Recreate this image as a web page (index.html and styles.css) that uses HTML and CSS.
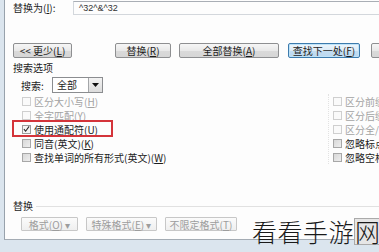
FILE: index.html
```html
<!DOCTYPE html>
<html lang="zh">
<head>
<meta charset="utf-8">
<link rel="stylesheet" href="styles.css">
</head>
<body>
<div class="dialog">
  <div class="row-replace">
    <span class="label">替换为(<u>I</u>):</span>
    <div class="field">^32^&amp;^32</div>
  </div>
  <div class="btn-row">
    <span class="btn b-less">&lt;&lt; 更少(<u>L</u>)</span>
    <span class="btn b-rep">替换(<u>R</u>)</span>
    <span class="btn b-all">全部替换(<u>A</u>)</span>
    <span class="btn b-next">查找下一处(<u>F</u>)</span>
    <span class="btn b-cut"></span>
  </div>
  <div class="section">搜索选项</div>
  <div class="search-row">
    <span class="label">搜索:</span>
    <div class="select"><span class="sel-text">全部</span><span class="sel-btn"><svg width="7" height="4" viewBox="0 0 7 4"><path d="M0 0h7L3.5 4z" fill="#111"/></svg></span></div>
  </div>
  <div class="opts">
    <div class="col">
      <div class="opt dis"><span class="box"></span>区分大小写(<u>H</u>)</div>
      <div class="opt dis"><span class="box"></span>全字匹配(<u>Y</u>)</div>
      <div class="opt"><span class="box on"><svg width="8" height="8" viewBox="0 0 8 8"><path d="M1 4.2l2 2.3L7 1" fill="none" stroke="#2a2a2a" stroke-width="1.2"/></svg></span>使用通配符(<u>U</u>)</div>
      <div class="opt"><span class="box en"></span>同音(英文)(<u>K</u>)</div>
      <div class="opt"><span class="box en"></span>查找单词的所有形式(英文)(<u>W</u>)</div>
    </div>
    <div class="col col-r">
      <div class="opt dis"><span class="box"></span>区分前缀(<u>X</u>)</div>
      <div class="opt dis"><span class="box"></span>区分后缀(<u>T</u>)</div>
      <div class="opt dis"><span class="box"></span>区分全/半角(<u>M</u>)</div>
      <div class="opt"><span class="box en"></span>忽略标点符号(<u>S</u>)</div>
      <div class="opt"><span class="box en"></span>忽略空格(<u>W</u>)</div>
    </div>
  </div>
  <div class="group"><span class="group-label">替换</span><span class="group-line"></span></div>
  <div class="btn-row2">
    <span class="btn dbtn d1">格式(<u>O</u>) ▾</span>
    <span class="btn dbtn d2">特殊格式(<u>E</u>) ▾</span>
    <span class="btn dbtn d3">不限定格式(<u>T</u>)</span>
  </div>
  <div class="mark"></div>
</div>
<div class="watermark">看看手游<span class="wbox">网</span></div>
</body>
</html>
```
FILE: styles.css
```css
html, body {
  margin: 0;
  padding: 0;
}
body {
  width: 379px;
  height: 252px;
  overflow: hidden;
  position: relative;
  background: #dbe5ee;
  font-family: "Noto Sans CJK SC", "Liberation Sans", sans-serif;
  font-size: 10px;
  color: #1c1c1c;
}
u { text-decoration: underline; }
.dialog {
  margin-left: 4px;
  height: 240px;
  background: #fdfdfd;
  border-left: 1px solid #98a2ac;
  border-bottom: 1px solid #a4acb4;
  padding-left: 8px;
  overflow: hidden;
  position: relative;
  box-sizing: border-box;
}
.row-replace {
  margin-top: 1px;
  height: 14px;
  display: flex;
  align-items: center;
}
.row-replace .label {
  width: 60px;
  flex: none;
  line-height: 14px;
}
.field {
  flex: 1;
  height: 14px;
  box-sizing: border-box;
  border-top: 1px solid #a9aeb5;
  border-bottom: 1px solid #d3d7dc;
  border-left: 1px solid #d3d7dc;
  padding-left: 5px;
  line-height: 12px;
  font-size: 9px;
  font-family: "Liberation Sans", sans-serif;
  color: #333;
}
.btn-row {
  margin-top: 28px;
  height: 15px;
  display: flex;
  white-space: nowrap;
}
.btn {
  height: 15px;
  box-sizing: border-box;
  border: 1px solid #8e8f91;
  border-radius: 2px;
  background: linear-gradient(#f6f6f6, #e9e9e9 50%, #dadada 51%, #d6d6d6);
  display: flex;
  align-items: center;
  justify-content: center;
  line-height: 13px;
  flex: none;
}
.b-less { width: 59px; }
.b-rep { width: 56px; margin-left: 43px; }
.b-all { width: 100px; margin-left: 8px; }
.b-next {
  width: 72px;
  margin-left: 9px;
  border-color: #3d7bad;
  background: linear-gradient(#eef6fc, #dcebf7 50%, #c4def2 51%, #bcd8ef);
  box-shadow: inset 0 0 0 1px #bfe3f8;
}
.b-cut { width: 30px; margin-left: 11px; }
.section {
  margin-top: 4px;
  height: 12px;
  line-height: 12px;
}
.search-row {
  margin-top: 3px;
  height: 16px;
  display: flex;
  align-items: center;
  padding-left: 8px;
}
.search-row .label { width: 31px; }
.select {
  width: 51px;
  height: 16px;
  box-sizing: border-box;
  border: 1px solid #8b8d90;
  display: flex;
  background: #fff;
}
.sel-text {
  flex: 1;
  padding-left: 4px;
  line-height: 14px;
}
.sel-btn {
  width: 13px;
  border-left: 1px solid #a4a6a9;
  background: linear-gradient(#f3f3f3, #dcdcdc);
  display: flex;
  align-items: center;
  justify-content: center;
}
.opts {
  margin-top: 1px;
  padding-left: 9px;
  display: grid;
  grid-template-columns: 311px auto;
}
.opt {
  height: 14px;
  display: flex;
  align-items: center;
  white-space: nowrap;
}
.opt.dis { color: #a3a3a3; }
.box {
  width: 9px;
  height: 9px;
  box-sizing: border-box;
  border: 1px solid #cfcfcf;
  background: #fafafa;
  margin-right: 3px;
  flex: none;
  display: flex;
  align-items: center;
  justify-content: center;
}
.box.en {
  border-color: #a7a7a7;
  background: linear-gradient(135deg, #d8d8d8, #eeeeee);
}
.box.on {
  border-color: #9c9c9c;
  background: #f4f4f4;
}
.col-r {
  overflow: hidden;
  border-left: 1px dotted #e2e2e2;
  margin-left: -5px;
  padding-left: 4px;
}
.group {
  margin-top: 36px;
  height: 12px;
  display: flex;
  align-items: center;
}
.group-label {
  line-height: 12px;
  margin-right: 3px;
}
.group-line {
  flex: 1;
  height: 1px;
  background: #e1e1e1;
}
.btn-row2 {
  margin-top: 5px;
  padding-left: 8px;
  display: flex;
  white-space: nowrap;
}
.dbtn {
  height: 14px;
  border-color: #c7c7c7;
  background: linear-gradient(#fbfbfb, #efefef);
  color: #9d9d9d;
  border-radius: 1px;
}
.d1 { width: 57px; }
.d2 { width: 71px; margin-left: 8px; }
.d3 { width: 72px; margin-left: 8px; }
.mark {
  position: absolute;
  left: 7px;
  top: 120px;
  width: 101px;
  height: 17px;
  box-sizing: border-box;
  border: 2px solid #d4343a;
}
.watermark {
  position: absolute;
  left: 252px;
  top: 215px;
  font-family: "Noto Sans CJK SC", sans-serif;
  font-weight: 300;
  font-size: 25px;
  line-height: 32px;
  color: #1a1a1a;
  white-space: nowrap;
  letter-spacing: 0.5px;
}
.wbox {
  display: inline-block;
  background: #e6e6e6;
  border: 1px solid #aaa;
  line-height: 25px;
}
```
